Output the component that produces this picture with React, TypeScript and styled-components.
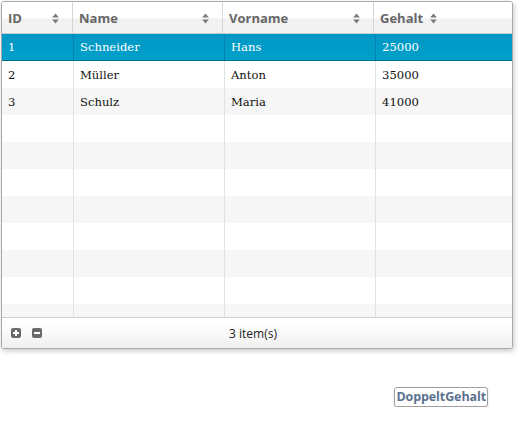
import React from "react";
import styled, { createGlobalStyle } from "styled-components";

const Global = createGlobalStyle`
  html, body { margin: 0; padding: 0; background: #fff; }
  body { font-family: "Open Sans", "DejaVu Sans", sans-serif; }
`;

const Page = styled.div`
  display: flex;
  flex-direction: column;
  padding: 1px 0 0 1px;
  width: 512px;
`;

const Grid = styled.div`
  width: 510px;
  height: 346px;
  border: 1px solid #a9a9a9;
  border-radius: 3px;
  box-shadow: 1px 2px 5px rgba(0, 0, 0, 0.22);
  overflow: hidden;
  display: flex;
  flex-direction: column;
  background: #fff;
`;

const HeaderRow = styled.div`
  display: grid;
  grid-template-columns: 71px 150px 151px 1fr;
  height: 31px;
  border-bottom: 1px solid #c8c8c8;
  background: linear-gradient(#ffffff 0%, #ffffff 50%, #f1f1f1 55%, #f3f3f3 100%);
`;

const HeaderCell = styled.div<{ $last?: boolean; $inline?: boolean }>`
  display: flex;
  align-items: center;
  justify-content: ${(p) => (p.$inline ? "flex-start" : "space-between")};
  gap: 7px;
  padding: 1px 13px 0 6px;
  border-right: ${(p) => (p.$last ? "none" : "1px solid #d6d6d6")};
  font-weight: 700;
  font-size: 13px;
  color: #676767;
`;

const SortIcon = () => (
  <svg width="7" height="11" viewBox="0 0 7 11">
    <path d="M3.5 0.5 L6.8 4.5 L0.2 4.5 Z M3.5 10.5 L6.8 6.5 L0.2 6.5 Z" fill="#7a7a7a" />
  </svg>
);

const Body = styled.div`
  flex: 1;
  overflow: hidden;
`;

const Row = styled.div<{ $selected?: boolean; $stripe?: boolean }>`
  display: grid;
  grid-template-columns: 72px 151px 151px 1fr;
  height: ${(p) => (p.$selected ? "26px" : "27px")};
  border-bottom: ${(p) => (p.$selected ? "1px solid #006f8e" : "none")};
  background: ${(p) =>
    p.$selected
      ? "linear-gradient(#0097c3, #00a0cb)"
      : p.$stripe
      ? "#f6f6f6"
      : "#ffffff"};
  color: ${(p) => (p.$selected ? "#ffffff" : "#111")};
`;

const Cell = styled.div<{ $last?: boolean; $selected?: boolean }>`
  display: flex;
  align-items: center;
  padding-left: 6px;
  border-right: ${(p) =>
    p.$last ? "none" : p.$selected ? "1px solid #0084ab" : "1px solid #e2e2e2"};
  font-family: "DejaVu Serif", "Liberation Serif", serif;
  font-size: 11.6px;
  white-space: nowrap;
`;

const Footer = styled.div`
  height: 30px;
  border-top: 1px solid #cfcfcf;
  display: flex;
  align-items: center;
  position: relative;
  background: linear-gradient(#ffffff 0%, #fbfbfb 40%, #f0f0f0 100%);
  padding-left: 9px;
  gap: 11px;
`;

const IconBtn = styled.div`
  width: 10px;
  height: 10px;
  border-radius: 2px;
  background: #6a6a6a;
  display: flex;
  align-items: center;
  justify-content: center;
`;

const PagerText = styled.div`
  position: absolute;
  left: 0;
  right: 0;
  text-align: center;
  font-size: 12px;
  color: #222;
  pointer-events: none;
  padding-right: 8px;
`;

const Action = styled.button`
  align-self: flex-end;
  margin-right: 25px;
  margin-top: 38px;
  height: 20px;
  padding: 0 1px;
  border: 1px solid #a0a0a0;
  border-radius: 3px;
  background: #fff;
  box-shadow: 0 1px 2px rgba(0, 0, 0, 0.2);
  font-family: "Open Sans", "DejaVu Sans", sans-serif;
  font-weight: 700;
  font-size: 12.5px;
  letter-spacing: -0.1px;
  color: #5a7290;
  cursor: pointer;
  line-height: 16px;
`;

const data = [
  { id: 1, name: "Schneider", vorname: "Hans", gehalt: 25000 },
  { id: 2, name: "Müller", vorname: "Anton", gehalt: 35000 },
  { id: 3, name: "Schulz", vorname: "Maria", gehalt: 41000 },
];

export default function App() {
  const rows = Array.from({ length: 11 }, (_, i) => data[i]);
  return (
    <Page>
      <Global />
      <Grid>
        <HeaderRow>
          <HeaderCell>
            ID <SortIcon />
          </HeaderCell>
          <HeaderCell>
            Name <SortIcon />
          </HeaderCell>
          <HeaderCell>
            Vorname <SortIcon />
          </HeaderCell>
          <HeaderCell $last $inline>
            Gehalt <SortIcon />
          </HeaderCell>
        </HeaderRow>
        <Body>
          {rows.map((r, i) => {
            const sel = i === 0;
            return (
              <Row key={i} $selected={sel} $stripe={i % 2 === 0}>
                <Cell $selected={sel}>{r ? r.id : ""}</Cell>
                <Cell $selected={sel}>{r ? r.name : ""}</Cell>
                <Cell $selected={sel}>{r ? r.vorname : ""}</Cell>
                <Cell $last>{r ? r.gehalt : ""}</Cell>
              </Row>
            );
          })}
        </Body>
        <Footer>
          <IconBtn>
            <svg width="8" height="8" viewBox="0 0 8 8">
              <path d="M3 1h2v2h2v2H5v2H3V5H1V3h2z" fill="#fff" />
            </svg>
          </IconBtn>
          <IconBtn>
            <svg width="8" height="8" viewBox="0 0 8 8">
              <rect x="1" y="3" width="6" height="2" fill="#fff" />
            </svg>
          </IconBtn>
          <PagerText>3 item(s)</PagerText>
        </Footer>
      </Grid>
      <Action>DoppeltGehalt</Action>
    </Page>
  );
}
